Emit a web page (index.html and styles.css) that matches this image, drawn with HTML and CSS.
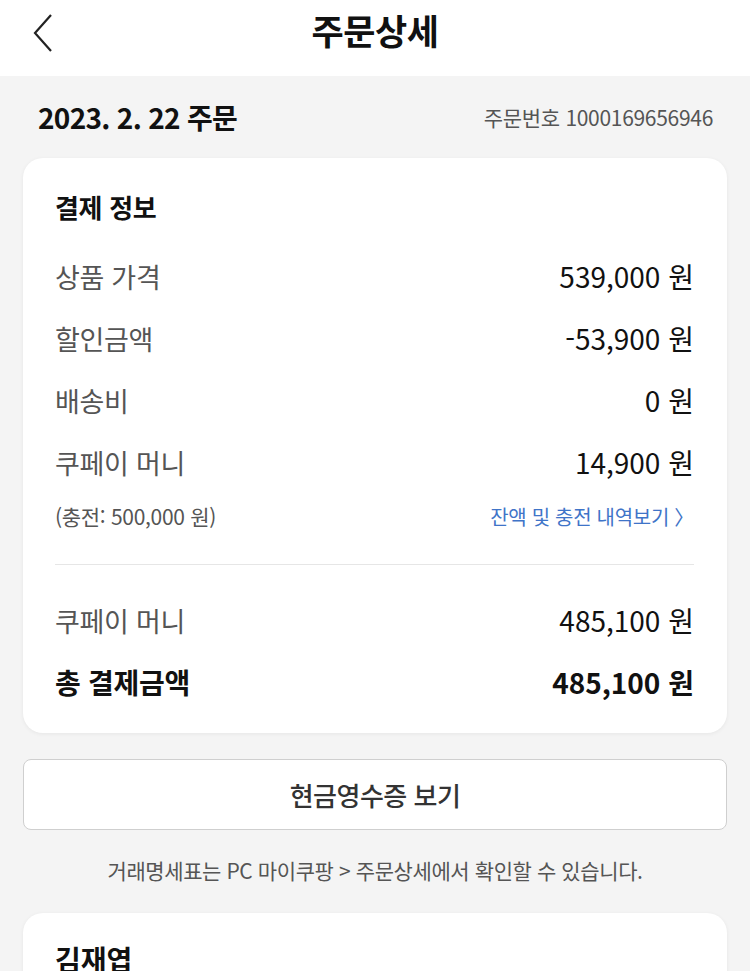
FILE: index.html
```html
<!DOCTYPE html>
<html lang="ko">
<head>
<meta charset="utf-8">
<title>주문상세</title>
<link rel="stylesheet" href="styles.css">
</head>
<body>
<header class="topbar">
  <svg class="back" width="22" height="40" viewBox="0 0 22 40"><polyline points="19,2 3,20 19,38" fill="none" stroke="#222" stroke-width="2.2" stroke-linejoin="miter"/></svg>
  <h1 class="title">주문상세</h1>
</header>
<main class="page">
  <div class="order-head">
    <span class="order-date">2023. 2. 22 주문</span>
    <span class="order-no">주문번호 1000169656946</span>
  </div>
  <section class="card">
    <h2 class="card-title">결제 정보</h2>
    <div class="row"><span class="label">상품 가격</span><span class="value">539,000 원</span></div>
    <div class="row"><span class="label">할인금액</span><span class="value">-53,900 원</span></div>
    <div class="row"><span class="label">배송비</span><span class="value">0 원</span></div>
    <div class="row"><span class="label">쿠페이 머니</span><span class="value">14,900 원</span></div>
    <div class="subrow"><span class="sub">(충전: 500,000 원)</span><span class="link">잔액 및 충전 내역보기 〉</span></div>
    <div class="divider"></div>
    <div class="row"><span class="label">쿠페이 머니</span><span class="value">485,100 원</span></div>
    <div class="row total"><span class="label">총 결제금액</span><span class="value">485,100 원</span></div>
  </section>
  <button class="receipt">현금영수증 보기</button>
  <p class="note">거래명세표는 PC 마이쿠팡 &gt; 주문상세에서 확인할 수 있습니다.</p>
  <section class="card card2">
    <h2 class="name">김재엽</h2>
  </section>
</main>
</body>
</html>
```
FILE: styles.css
```css
* { box-sizing: border-box; }
html, body { margin: 0; padding: 0; }
body {
  width: 750px;
  height: 971px;
  overflow: hidden;
  background: #f4f4f4;
  font-family: "Noto Sans CJK KR", "Noto Sans", sans-serif;
  color: #111;
}
.topbar {
  height: 76px;
  background: #fff;
  display: flex;
  align-items: center;
  justify-content: center;
  position: relative;
}
.back {
  position: absolute;
  left: 32px;
  top: 13px;
}
.title {
  margin: 0;
  font-size: 35px;
  font-weight: 700;
  letter-spacing: -0.5px;
  line-height: 40px;
  margin-top: -16px;
}
.page {
  padding: 0 23px 0 23px;
}
.order-head {
  height: 82px;
  display: flex;
  align-items: center;
  justify-content: space-between;
  padding: 0 14px 0 15px;
}
.order-date {
  font-size: 28px;
  font-weight: 700;
  letter-spacing: -0.7px;
}
.order-no {
  font-size: 21px;
  color: #555;
  letter-spacing: -0.3px;
}
.card {
  background: #fff;
  border-radius: 20px;
  box-shadow: 0 1px 4px rgba(0,0,0,0.06);
  padding: 28px 33px 20px 32px;
}
.card-title {
  margin: 0 0 17px 0;
  font-size: 26px;
  font-weight: 700;
  line-height: 42px;
  letter-spacing: -0.3px;
}
.row {
  height: 62px;
  display: flex;
  align-items: center;
  justify-content: space-between;
}
.label {
  color: #555;
  font-size: 27px;
  letter-spacing: -0.3px;
}
.value {
  color: #111;
  font-size: 28px;
  letter-spacing: 0;
}
.total .label, .total .value {
  color: #111;
  font-weight: 700;
}
.total .label { font-size: 28px; }
.subrow {
  height: 46px;
  display: flex;
  align-items: center;
  justify-content: space-between;
}
.sub { color: #555; font-size: 21px; letter-spacing: -0.3px; }
.link { color: #3f74c8; font-size: 20px; letter-spacing: -0.3px; }
.divider {
  margin-top: 25px;
  height: 1px;
  background: #e6e6e6;
  margin-bottom: 24px;
}
.receipt {
  display: block;
  width: 100%;
  height: 71px;
  margin-top: 26px;
  background: #fff;
  border: 1.5px solid #cfcfcf;
  border-radius: 8px;
  font-family: inherit;
  font-size: 26px;
  font-weight: 500;
  color: #333;
  letter-spacing: -0.5px;
}
.note {
  margin: 25px 0 28px 0;
  line-height: 30px;
  text-align: center;
  font-size: 21px;
  color: #555;
  letter-spacing: -0.4px;
}
.card2 {
  height: 200px;
  padding-top: 26px;
}
.name {
  margin: 0;
  font-size: 28px;
  font-weight: 700;
  line-height: 40px;
}
```
